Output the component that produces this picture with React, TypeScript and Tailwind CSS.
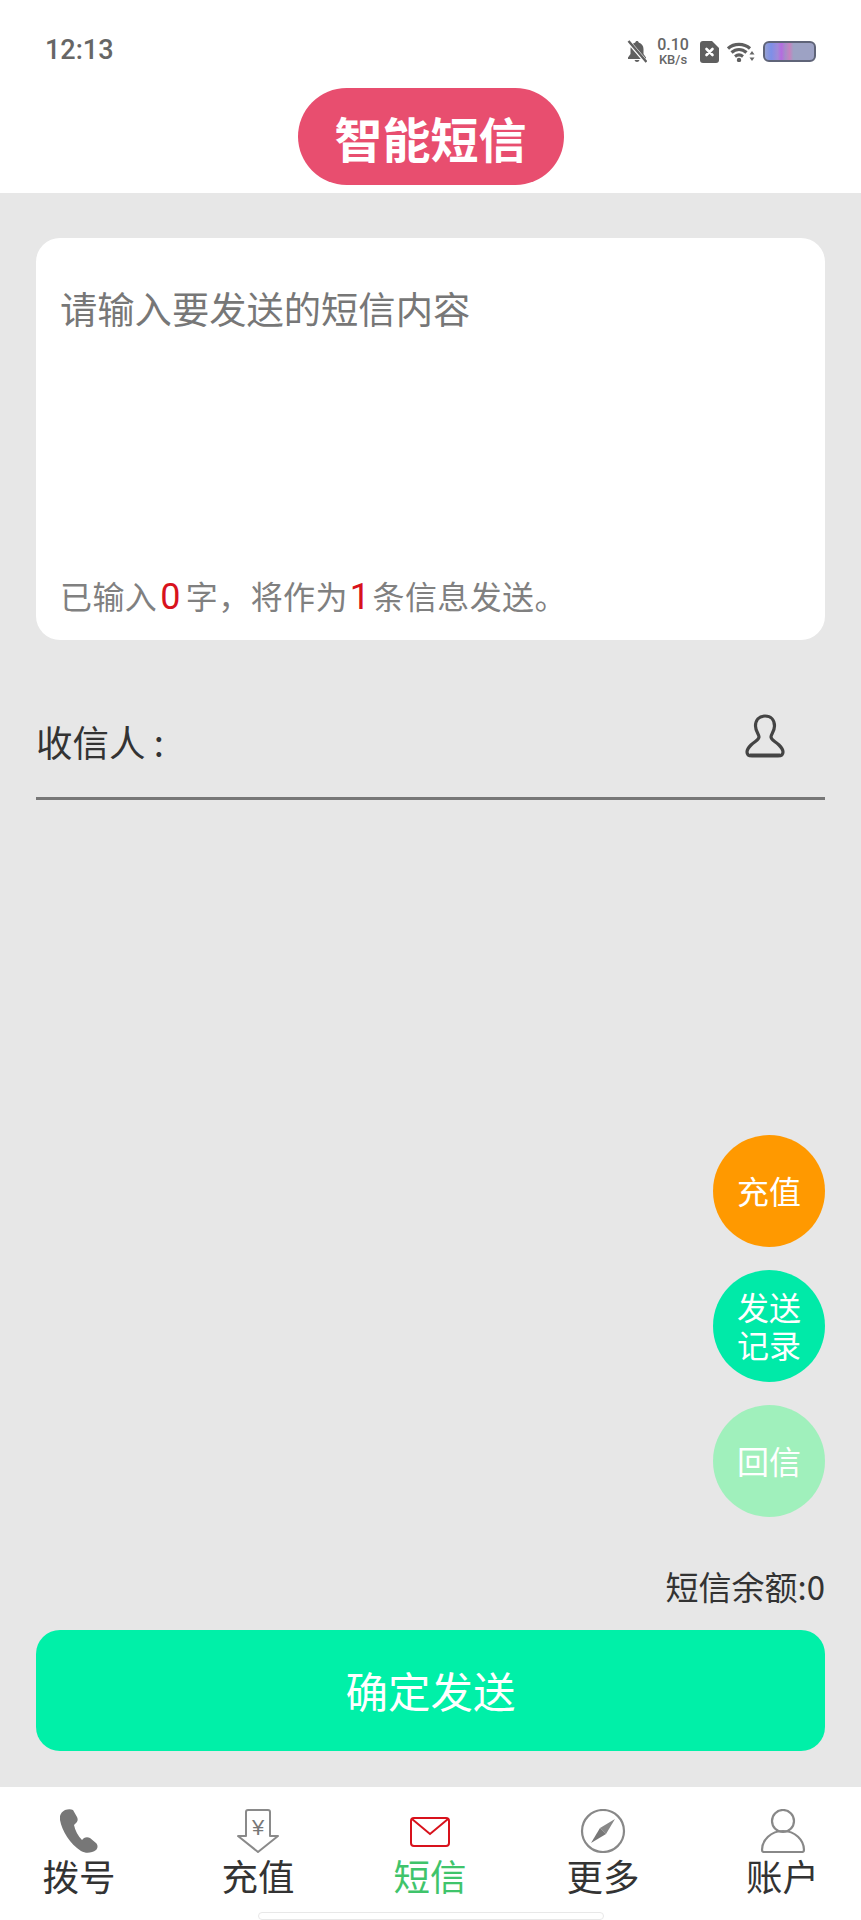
import React from "react";

const cjk = "font-['Noto_Sans_CJK_SC','Noto_Sans',sans-serif]";

function StatusIcons() {
  return (
    <div className="flex items-center">
      <svg width="20" height="23" viewBox="0 0 20 23" className="mr-[9px]">
        <path d="M10 1c-1 0-1.600.7-1.700 1.600C5.300 3.400 3.500 6 3.500 9v5L1 17.500V19h18v-1.500L16.500 14V9c0-3-1.800-5.600-4.800-6.400C11.600 1.700 11 1 10 1zM7.500 20a2.600 2.600 0 0 0 5 0z" fill="#5f5f5f" />
        <path d="M1 1l18 21" stroke="#fff" strokeWidth="4" />
        <path d="M1.500 1l18 21" stroke="#5f5f5f" strokeWidth="2.400" />
      </svg>
      <div className="w-[34px] mr-[10px] flex flex-col items-center font-['Roboto',sans-serif] font-medium text-[#666] leading-none">
        <span className="text-[16px] leading-[16px]">0.10</span>
        <span className="text-[13px] leading-[13px]">KB/s</span>
      </div>
      <svg width="19" height="22" viewBox="0 0 19 22" className="mr-[8px]">
        <path d="M3 0h9l7 7v12a3 3 0 0 1-3 3H3a3 3 0 0 1-3-3V3a3 3 0 0 1 3-3z" fill="#5f5f5f" />
        <path d="M6.500 8l6 6M12.500 8l-6 6" stroke="#fff" strokeWidth="2.600" strokeLinecap="round" />
      </svg>
      <svg width="28" height="20" viewBox="0 0 28 20" className="mr-[8px]">
        <path d="M1 6.500C7 1 17 1 23 6.500" fill="none" stroke="#5f5f5f" strokeWidth="3.200" />
        <path d="M4.500 10.500C9 6.500 15 6.500 19.500 10.500" fill="none" stroke="#5f5f5f" strokeWidth="3.200" />
        <path d="M8 14.500c2.500-2 5.500-2 8 0" fill="none" stroke="#5f5f5f" strokeWidth="3" />
        <circle cx="12" cy="18" r="2.200" fill="#5f5f5f" />
        <path d="M25 9l2.500 3.500h-5zM25 19l-2.500-3.500h5z" fill="#666" />
      </svg>
      <svg width="53" height="21" viewBox="0 0 53 21">
        <defs>
          <linearGradient id="bat" x1="0" x2="1" y1="0" y2="0">
            <stop offset="0" stopColor="#9aa3d0" />
            <stop offset="0.14" stopColor="#7d8fe8" />
            <stop offset="0.27" stopColor="#a18ad8" />
            <stop offset="0.34" stopColor="#b56be0" />
            <stop offset="0.42" stopColor="#a78cc8" />
            <stop offset="0.5" stopColor="#c782c0" />
            <stop offset="0.58" stopColor="#9da2c4" />
            <stop offset="1" stopColor="#9da2c4" />
          </linearGradient>
        </defs>
        <rect x="1" y="1" width="51" height="19" rx="5" fill="url(#bat)" stroke="#5f6478" strokeWidth="2" />
      </svg>
    </div>
  );
}

function PhoneIcon() {
  return (
    <svg width="38" height="44" viewBox="0 0 38 44">
      <path d="M5 1C1 3-1 7 0 11c2 11 10 24 21 31 5 3 11 2 15-1 2-2 2-5 0-7l-6-5c-2-1-4-1-6 0l-2 2c-4-4-7-10-8-15l2-2c2-2 2-4 1-6l-4-7C11 0 8 0 5 1z" fill="#777" />
    </svg>
  );
}

function RechargeIcon() {
  return (
    <svg width="44" height="44" viewBox="0 0 44 44">
      <path d="M10 27V3a2 2 0 0 1 2-2h20a2 2 0 0 1 2 2v24h8L22 43 2 27z" fill="none" stroke="#8a8a8a" strokeWidth="2" strokeLinejoin="round" />
      <text x="22" y="26" textAnchor="middle" fontSize="22" fill="#777" fontFamily="Liberation Sans, sans-serif">¥</text>
    </svg>
  );
}

function MailIcon() {
  return (
    <svg width="40" height="44" viewBox="0 0 40 44">
      <rect x="1" y="9" width="38" height="28" rx="3" fill="none" stroke="#d8121c" strokeWidth="2" />
      <path d="M2 10l18 15L38 10" fill="none" stroke="#d8121c" strokeWidth="2" />
    </svg>
  );
}

function CompassIcon() {
  return (
    <svg width="46" height="44" viewBox="0 0 46 44">
      <circle cx="23" cy="22" r="21" fill="none" stroke="#888" strokeWidth="2.200" />
      <path d="M35 10L26 25 20 19z" fill="#888" />
      <path d="M11 34l9-15 6 6z" fill="#777" />
    </svg>
  );
}

function UserIcon() {
  return (
    <svg width="46" height="44" viewBox="0 0 46 44">
      <circle cx="23" cy="12" r="11" fill="none" stroke="#888" strokeWidth="2.200" />
      <path d="M2 41c0-10 9-19 21-19s21 9 21 19c0 1.500-.5 2-2 2H4c-1.500 0-2-.5-2-2z" fill="none" stroke="#888" strokeWidth="2.200" />
    </svg>
  );
}

function Nav({ icon, label, active }: { icon: React.ReactNode; label: string; active?: boolean }) {
  return (
    <div className="flex flex-col items-center">
      <div className="h-[44px] flex items-center justify-center">{icon}</div>
      <span className={`text-[36.500px] leading-[45px] ${active ? "text-[#3fc46b]" : "text-[#333]"}`}>{label}</span>
    </div>
  );
}

function Circle({ bg, children }: { bg: string; children: React.ReactNode }) {
  return (
    <div className={`w-[112px] h-[112px] rounded-full flex items-center justify-center text-center text-white text-[32px] leading-[38px] pb-[3px] ${bg}`}>
      {children}
    </div>
  );
}

export default function App() {
  return (
    <div className={`w-full h-[1920px] flex flex-col bg-white overflow-hidden ${cjk}`}>
      <header className="h-[193px] shrink-0 flex flex-col">
        <div className="h-[88px] flex items-start justify-between pl-[45px] pr-[45px] pt-[33px]">
          <span className="font-['Roboto',sans-serif] font-medium text-[27px] leading-[34px] text-[#666]">12:13</span>
          <div className="pt-[4px]"><StatusIcons /></div>
        </div>
        <div className="flex justify-center">
          <div className="w-[266px] h-[97px] rounded-full bg-[#e84e6f] flex items-center justify-center text-white font-bold text-[48px] leading-none">
            智能短信
          </div>
        </div>
      </header>

      <main className="flex-1 flex flex-col bg-[#e7e7e7] px-[36px] pt-[45px] pb-[36px]">
        <div className="h-[402px] shrink-0 rounded-[24px] bg-white px-[24px] flex flex-col justify-between">
          <p className="pt-[42px] text-[37.300px] leading-[56px] text-[#777]">请输入要发送的短信内容</p>
          <p className="pb-[16px] text-[32px] tracking-[0.4px] leading-[54px] text-[#808080]">
            已输入<span className="text-[36px] ml-[3px] mr-[5px] text-[#d8121c] font-['Roboto',sans-serif]">0</span>字，将作为<span className="text-[36px] ml-[2px] mr-[2px] text-[#d8121c] font-['Roboto',sans-serif]">1</span>条信息发送。
          </p>
        </div>

        <div className="h-[160px] shrink-0 flex items-end border-b-[3px] border-[#777] pb-[28px] pr-[40px] justify-between">
          <span className="text-[36.500px] leading-[54px] text-[#333]">收信人 :</span>
          <svg width="40" height="44" viewBox="0 0 40 44" className="mb-[11px]">
            <path d="M20 2c-6 0-9.500 4-9.500 10 0 5 3.500 8 3.500 11 0 3-4 4-8 8-3 3-4 5-4 7 0 3 2 4 5 4h26c3 0 5-1 5-4 0-2-1-4-4-7-4-4-8-5-8-8 0-3 3.500-6 3.500-11 0-6-3.500-10-9.500-10z" fill="none" stroke="#444" strokeWidth="3.200" />
            <path d="M5 41h30" stroke="#444" strokeWidth="3" />
          </svg>
        </div>

        <div className="flex-1 flex flex-col justify-end items-end gap-[23px]">
          <Circle bg="bg-[#ff9900]">充值</Circle>
          <Circle bg="bg-[#00eaa8]"><span>发送<br />记录</span></Circle>
          <Circle bg="bg-[#a0f0bc]">回信</Circle>
        </div>

        <div className="mt-[46px] text-right text-[33px] leading-[46px] text-[#333]">短信余额:0</div>
        <div className="mt-[21px] h-[121px] shrink-0 rounded-[24px] bg-[#00f0a8] flex items-center justify-center text-white text-[42.500px] leading-none">
          确定发送
        </div>
      </main>

      <nav className="h-[133px] shrink-0 bg-white flex flex-col">
        <div className="pt-[22px] grid grid-cols-[158px_200px_144px_202px_157px] justify-items-center">
          <Nav icon={<PhoneIcon />} label="拨号" />
          <Nav icon={<RechargeIcon />} label="充值" />
          <Nav icon={<MailIcon />} label="短信" active />
          <Nav icon={<CompassIcon />} label="更多" />
          <Nav icon={<UserIcon />} label="账户" />
        </div>
        <div className="mt-[14px] mx-auto w-[346px] h-[8px] rounded-[5px] border border-[#e8e8e8] bg-white" />
      </nav>
    </div>
  );
}
